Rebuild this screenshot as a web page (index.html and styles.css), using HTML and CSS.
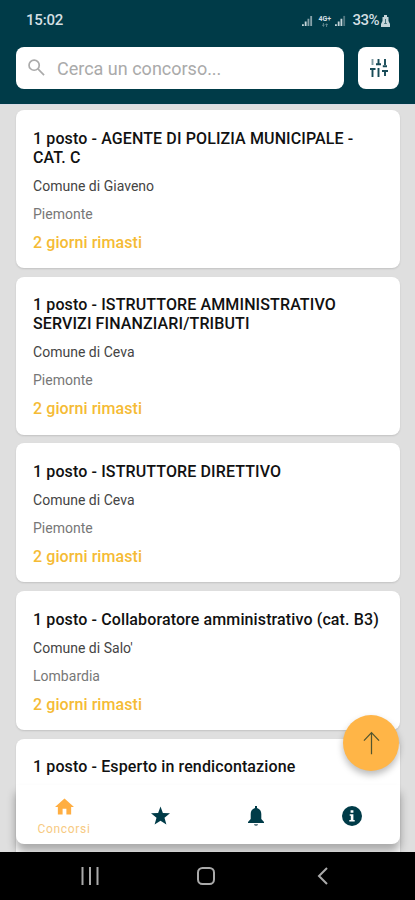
FILE: index.html
```html
<!DOCTYPE html>
<html lang="it">
<head>
<meta charset="utf-8">
<meta name="viewport" content="width=device-width, initial-scale=1">
<title>Concorsi</title>
<link rel="stylesheet" href="styles.css">
</head>
<body>
<div class="app">
  <header class="header">
    <div class="status">
      <span class="time">15:02</span>
      <div class="status-icons">
        <svg class="signal" viewBox="0 0 12 12"><path d="M0 12V10H2V12ZM3 12V7H5V12Z" fill="#c5d5d9"/><path d="M6 12V4H8V12ZM9 12V1H11V12Z" fill="#87a2a9"/></svg>
        <span class="network"><span>4G+</span><svg class="arrows" viewBox="0 0 8 5" fill="none" stroke="#7898a0"><path d="M2 0V4M.5 2.5L2 4L3.5 2.5M6 5V1M4.5 2.5L6 1L7.5 2.5"/></svg></span>
        <svg class="signal" viewBox="0 0 12 12"><path d="M0 12V10H2V12ZM3 12V7H5V12ZM6 12V4H8V12Z" fill="#c5d5d9"/><path d="M9 12V1H11V12Z" fill="#527881"/></svg>
        <span class="percent">33%</span>
        <svg class="battery" viewBox="0 0 9 12"><path d="M3 0H6V2H7.5V6L9 9V12H0V9L1.5 6V2H3Z" fill="#c5d5d9"/><path d="M4.5 4V8M3.2 8.5H5.8" stroke="#45717b" fill="none"/></svg>
      </div>
    </div>
    <div class="search-row">
      <div class="search">
        <svg class="search-icon" viewBox="0 0 18 18" fill="none" stroke="#aaa" stroke-width="1.8"><circle cx="6.5" cy="6.5" r="5.4"/><path d="M10.5 10.5L17 17"/></svg>
        <span>Cerca un concorso<span class="dots">...</span></span>
      </div>
      <button class="filter" aria-label="Filtri">
        <svg viewBox="0 0 20 20" fill="none" stroke="#174b57" stroke-width="1.9"><path d="M3.5 1V7" stroke="#829da4"/><path d="M9.5 1V7M7 6.3H12M16 1V7M13.8 8.3H18M1 11H6.5M3.5 11V19M9.5 10V19M13 13H19M16 13V18"/></svg>
      </button>
    </div>
  </header>
  <main class="list">
    <article class="card"><h2>1 posto - AGENTE DI POLIZIA MUNICIPALE -<br>CAT. C</h2><p class="town">Comune di Giaveno</p><p class="region">Piemonte</p><p class="left">2 giorni rimasti</p></article>
    <article class="card"><h2>1 posto - ISTRUTTORE AMMINISTRATIVO<br>SERVIZI FINANZIARI/TRIBUTI</h2><p class="town">Comune di Ceva</p><p class="region">Piemonte</p><p class="left">2 giorni rimasti</p></article>
    <article class="card"><h2>1 posto - ISTRUTTORE DIRETTIVO</h2><p class="town">Comune di Ceva</p><p class="region">Piemonte</p><p class="left">2 giorni rimasti</p></article>
    <article class="card"><h2>1 posto - Collaboratore amministrativo (cat. B3)</h2><p class="town">Comune di Salo'</p><p class="region">Lombardia</p><p class="left">2 giorni rimasti</p></article>
    <article class="card"><h2>1 posto - Esperto in rendicontazione</h2></article>
  </main>
  <button class="fab" aria-label="Torna su"><svg viewBox="0 0 18 24" fill="none" stroke="#52552f" stroke-width="1.3"><path d="M9 24V1M1 9.5L9 1L17 9.5"/></svg></button>
  <nav class="tabs">
    <a class="tab active"><svg class="home" viewBox="0 0 20 17" fill="#ffae42"><path d="M10 0L20 9H17V17H12V11H8V17H3V9H0Z"/></svg><span>Concorsi</span></a>
    <a class="tab"><svg class="star" viewBox="0 0 20 19" fill="#003b48"><path d="M10 0L12.5 6.8L20 7.2L14.2 11.9L16.2 19L10 15L3.8 19L5.8 11.9L0 7.2L7.5 6.8Z"/></svg></a>
    <a class="tab"><svg class="bell" viewBox="0 0 16 20" fill="#003b48"><path d="M7 2V0H9V2C12 3 13.3 5 13.3 8V13L16 16V17H0V16L2.7 13V8C2.7 5 4 3 7 2Z"/><path d="M6 18H10C10 20.6 6 20.6 6 18Z" fill="#66818a"/></svg></a>
    <a class="tab"><svg class="info" viewBox="0 0 20 20"><circle cx="10" cy="10" r="10" fill="#003b48"/><path d="M8.6 4.2H11.4V6.8H8.6ZM7.7 8.3H11.4V14H12.7V15.5H7.3V14H8.8V9.8H7.7Z" fill="#fff"/></svg></a>
  </nav>
  <footer class="system">
    <svg class="recent" viewBox="0 0 18 18" stroke="#aaa" stroke-width="2"><path d="M1.5 0V18M9 0V18M16.5 0V18"/></svg>
    <svg class="home-key" viewBox="0 0 18 18" fill="none" stroke="#aaa" stroke-width="2"><rect x="1" y="1" width="16" height="16" rx="4.5"/></svg>
    <svg class="back" viewBox="0 0 11 18" fill="none" stroke="#aaa" stroke-width="2"><path d="M10 1L2 9L10 17"/></svg>
  </footer>
</div>
</body>
</html>
```
FILE: styles.css
```css
* { box-sizing: border-box; }
body { margin: 0; font-family: Roboto, sans-serif; background: #dfdfdf; }
h2, p { margin: 0; }
svg { display: block; overflow: visible; flex: none; }
button { border: 0; padding: 0; display: grid; place-items: center; }
.app { position: relative; width: 415px; height: 900px; overflow: hidden; display: flex; flex-direction: column; }
.header { height: 104px; flex: none; background: #003b48; padding: 0 16px; }
.status { height: 47px; padding: 11px 9px 0 10px; display: flex; justify-content: space-between; color: #d3dfe2; }
.time { font-size: 15px; line-height: 19px; font-weight: 500; letter-spacing: -.2px; }
.status-icons { display: flex; align-items: center; height: 19px; }
.signal { width: 11px; height: 11px; }
.network { width: 13px; margin: 0 4px 0 5px; font-size: 7px; line-height: 8px; font-weight: 700; display: grid; justify-items: center; }
.arrows { width: 8px; height: 4px; }
.percent { margin-left: 6px; font-size: 15px; line-height: 19px; font-weight: 500; letter-spacing: -.5px; }
.battery { width: 9px; height: 12px; margin-left: 2px; }
.search-row { display: flex; justify-content: space-between; }
.search { width: 328px; height: 42px; border-radius: 8px; background: #fff; display: flex; align-items: center; padding: 1px 0 0 12px; gap: 12px; color: #aaa; font-size: 18px; line-height: 24px; }
.search-icon { width: 17px; height: 17px; margin-top: -2px; }
.dots { letter-spacing: -.1px; }
.filter { width: 41px; height: 42px; border-radius: 8px; background: #fff; }
.filter svg { width: 20px; height: 20px; }
.list { flex: 1; min-height: 0; overflow: hidden; padding: 5px 15px 0 16px; display: flex; flex-direction: column; gap: 8.7px; border-top: 1px solid #d9dbe5; }
.card { flex: none; background: #fff; border-radius: 8px; padding: 18.5px 17px 16px; box-shadow: 0 1px 2px #0002; height: 139px; }
.card:nth-child(-n+2) { height: 158px; }
h2 { font-size: 16px; line-height: 19px; font-weight: 500; letter-spacing: .12px; color: #111; white-space: nowrap; }
.town, .region { font-size: 14px; line-height: 18px; letter-spacing: .02px; }
.town { margin-top: 10px; color: #444; }
.region { margin-top: 10px; color: #777; }
.left { margin-top: 10px; font-size: 16px; line-height: 20px; font-weight: 500; letter-spacing: .08px; color: #f5bb35; }
.fab { position: absolute; z-index: 3; left: 343px; top: 715px; width: 56px; height: 56px; border-radius: 50%; background: #ffb547; box-shadow: 0 4px 7px #0004; }
.fab svg { width: 17px; height: 24px; }
.tabs { position: absolute; z-index: 2; left: 16px; right: 15px; top: 785px; height: 59px; display: grid; grid-template-columns: repeat(4, 1fr); background: #fff; border-radius: 0 0 8px 8px; box-shadow: 0 8px 10px #0005; }
.tab { display: flex; flex-direction: column; align-items: center; justify-content: center; padding-top: 2px; }
.active { padding-top: 5px; color: #f7ca82; font-size: 12px; line-height: 15px; letter-spacing: .7px; gap: 7px; }
.home { width: 19px; height: 17px; }
.star { width: 19px; height: 19px; }
.bell { width: 16px; height: 20px; }
.info { width: 20px; height: 20px; }
.system { position: relative; z-index: 3; height: 48px; flex: none; background: #000; display: grid; grid-template-columns: 116px 120px 11px; align-items: center; padding-left: 81px; }
.recent, .home-key { width: 18px; height: 18px; }
.back { width: 11px; height: 18px; }
```
